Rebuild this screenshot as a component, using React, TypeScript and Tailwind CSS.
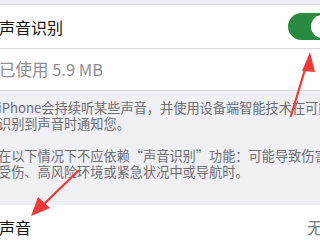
import React from "react";

const font = { fontFamily: '"Noto Sans CJK SC", "Noto Sans", sans-serif' };

const Arrows = () => (
  <svg
    className="absolute inset-0 pointer-events-none"
    width="320"
    height="240"
    viewBox="0 0 320 240"
  >
    {/* arrow to the toggle */}
    <line x1="291" y1="116" x2="306" y2="66" stroke="#ee3a36" strokeWidth="2.2" strokeLinecap="round" />
    <polygon points="310,52 302,71 315,72" fill="#ee3a36" />
    {/* arrow to 声音 */}
    <line x1="78" y1="171" x2="44" y2="204" stroke="#ee3a36" strokeWidth="2.2" strokeLinecap="round" />
    <polygon points="31,216 38,197 50,208" fill="#ee3a36" />
  </svg>
);

export default function App() {
  return (
    <div className="relative w-[320px] h-[240px] overflow-hidden bg-white" style={font}>
      <div className="h-[5px] bg-[#efeff4] border-b border-[#d8d8dc]" />

      <div className="h-[44px] flex items-center justify-between border-b border-[#d8d8dc]">
        <span className="text-[16px] text-[#111] leading-none -ml-[1px]">声音识别</span>
        <div className="w-[48px] h-[27px] mr-[-16px] rounded-full bg-[#2a8a42] flex items-center justify-end pr-[2px]">
          <div className="w-[23px] h-[23px] rounded-full bg-white" />
        </div>
      </div>

      <div className="h-[42px] flex items-center border-b border-[#d8d8dc]">
        <span className="text-[16.5px] text-[#8e8e93] leading-none -ml-[1px]">已使用 5.9 MB</span>
      </div>

      <div className="h-[114px] bg-[#efeff4] pt-[9px] text-[13.2px] leading-[16px] text-[#6d6d72] whitespace-nowrap -ml-[2px]">
        <div>iPhone会持续听某些声音，并使用设备端智能技术在可能</div>
        <div>识别到声音时通知您。</div>
        <div className="mt-[16px]">在以下情况下不应依赖“声音识别”功能：可能导致伤害或</div>
        <div>受伤、高风险环境或紧急状况中或导航时。</div>
      </div>

      <div className="h-[35px] flex items-center justify-between">
        <span className="text-[16px] text-[#111] leading-none -ml-[1px] mt-[8px]">声音</span>
        <span className="text-[16px] text-[#7a7a7e] leading-none mr-[-3px] mt-[8px]">无</span>
      </div>

      <Arrows />
    </div>
  );
}
